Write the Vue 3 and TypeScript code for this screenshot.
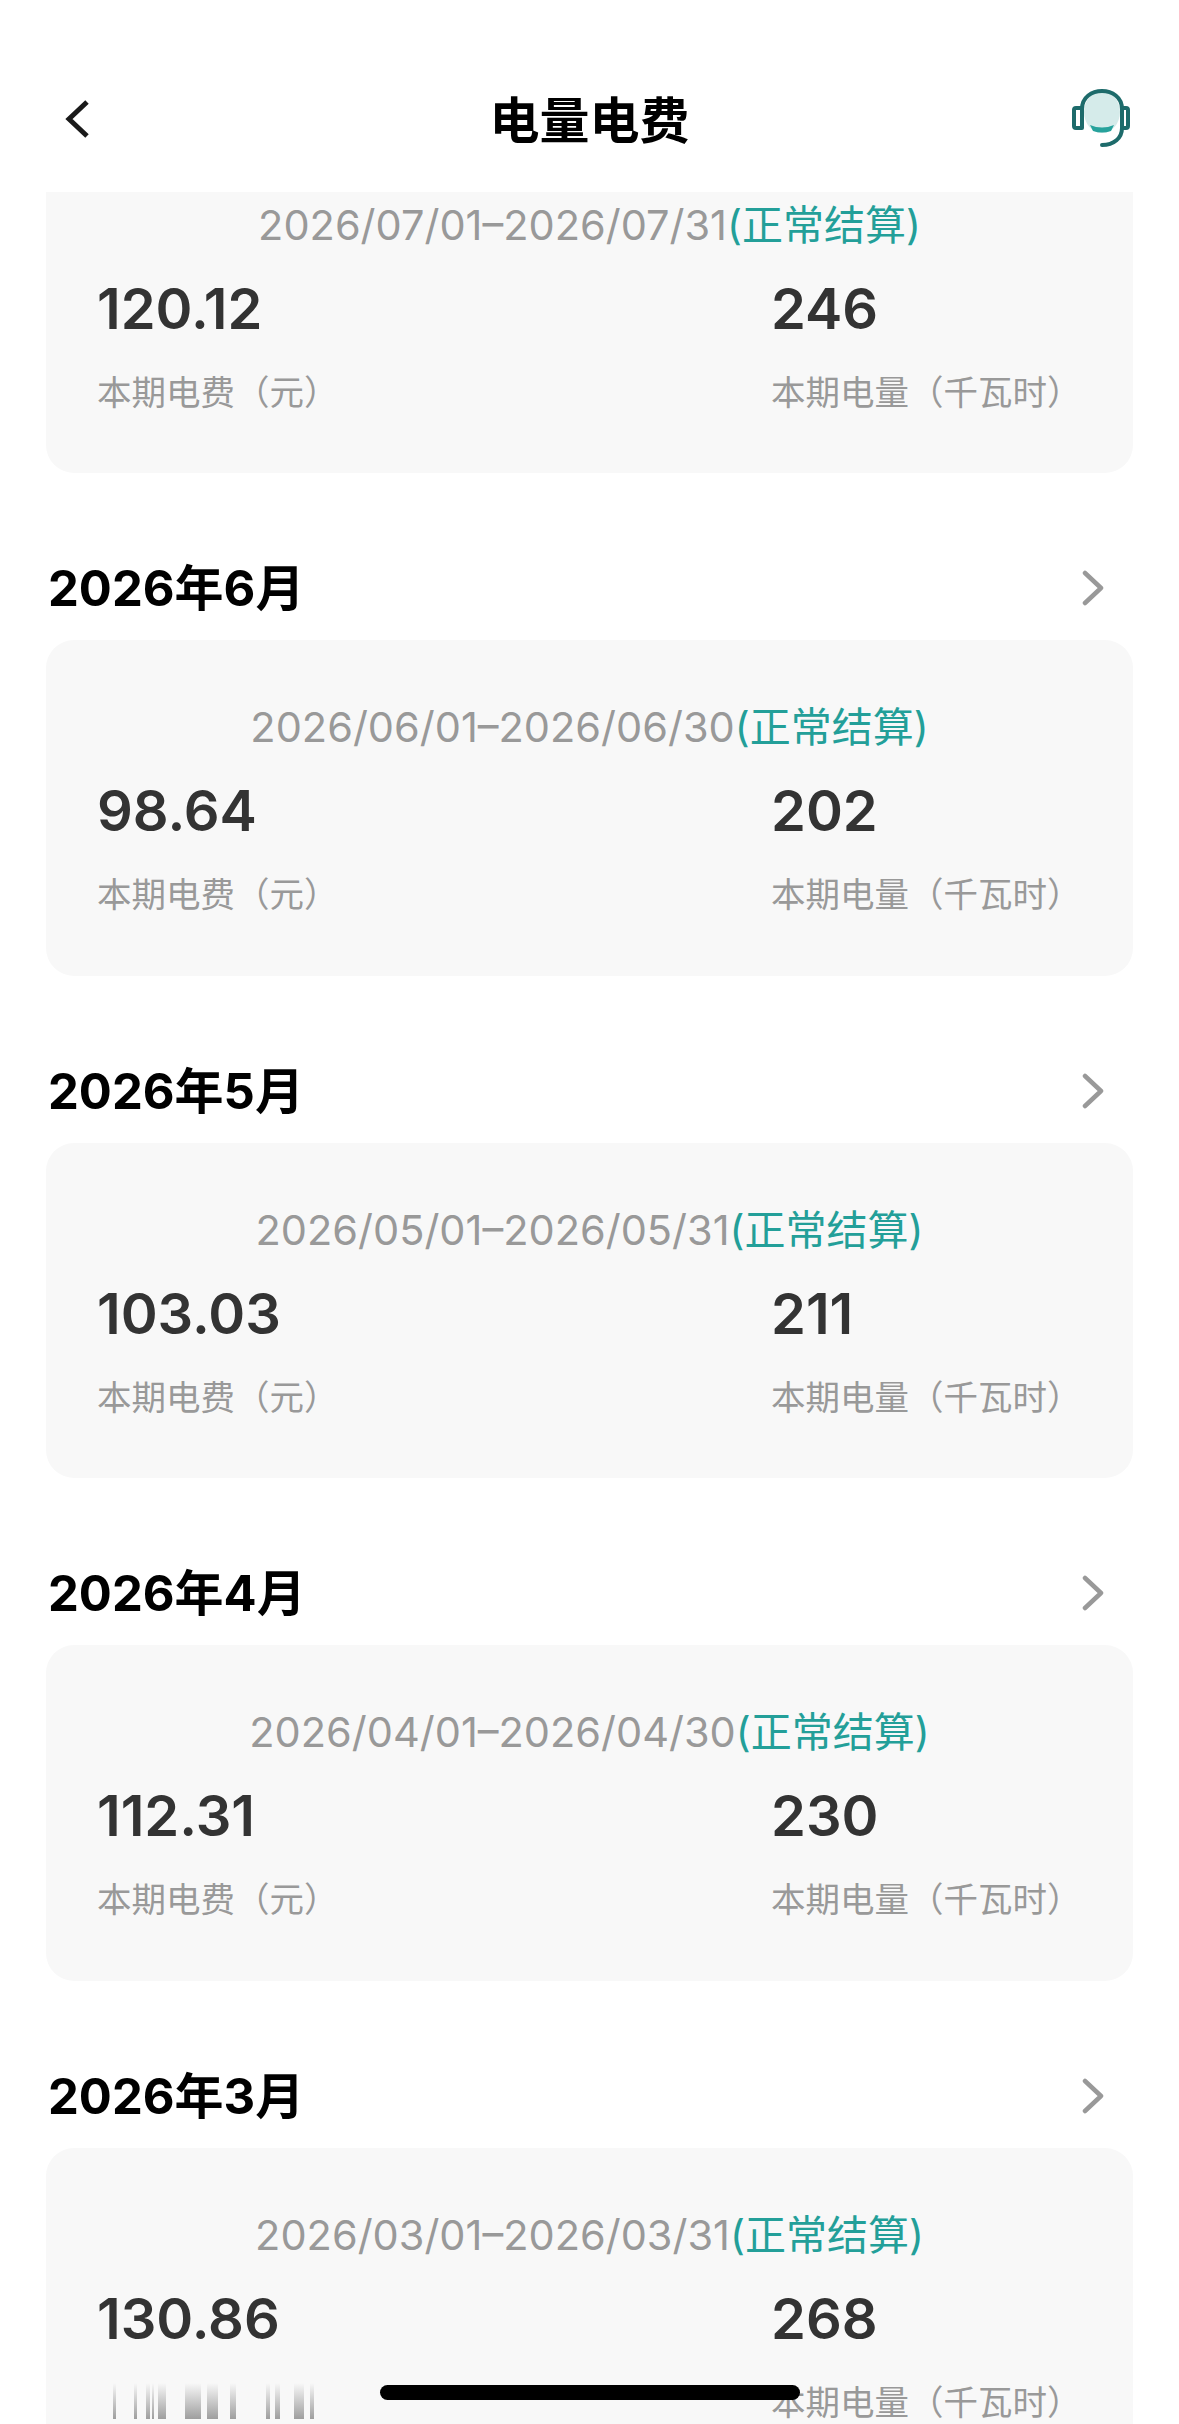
<script setup lang="ts">
interface Bill {
  month?: string;
  period: string;
  fee: string;
  power: string;
}

const bills: Bill[] = [
  { period: '2026/07/01–2026/07/31', fee: '120.12', power: '246' },
  { month: '2026年6月', period: '2026/06/01–2026/06/30', fee: '98.64', power: '202' },
  { month: '2026年5月', period: '2026/05/01–2026/05/31', fee: '103.03', power: '211' },
  { month: '2026年4月', period: '2026/04/01–2026/04/30', fee: '112.31', power: '230' },
  { month: '2026年3月', period: '2026/03/01–2026/03/31', fee: '130.86', power: '268' }
];

// streaks smeared over the last fee label: gap before, width
const streaks = [
  [0, 3], [18, 3], [9, 4], [2, 2], [4, 8], [19, 16], [6, 11], [12, 6], [30, 4], [5, 5], [14, 10], [6, 4]
];
</script>

<template>
  <div class="page">
    <header class="nav">
      <svg class="back" viewBox="0 0 30 40" width="30" height="40">
        <path d="M25 3 L7 20 L25 37" fill="none" stroke="#1a1a1a" stroke-width="5" />
      </svg>
      <h1 class="nav_title">电量电费</h1>
      <svg class="service" viewBox="0 0 60 62" width="60" height="62">
        <ellipse cx="31" cy="24" rx="18" ry="21" fill="#d5ebea" />
        <path d="M19 37 Q31 42 43 37 L40 43 Q31 46 22 43 Z" fill="#27a29c" />
        <path d="M11 32 V21 C11 -3 51 -3 51 21 V40 C51 50 43 57 31 57" fill="none" stroke="#1d6b6b" stroke-width="4" stroke-linecap="round" />
        <path d="M11 20 H5 Q3 20 3 22 V38 Q3 40 5 40 H11 Z M51 20 H55 Q57 20 57 22 V38 Q57 40 55 40 H51 Z" fill="none" stroke="#1d6b6b" stroke-width="4" stroke-linejoin="round" />
      </svg>
    </header>

    <main class="list">
      <section v-for="bill in bills" :key="bill.period" class="group">
        <div v-if="bill.month" class="month_row">
          <span class="month">{{ bill.month }}</span>
          <svg viewBox="0 0 24 36" width="24" height="36">
            <path d="M4 3 L20 18 L4 33" fill="none" stroke="#999" stroke-width="4.5" stroke-linecap="round" stroke-linejoin="round" />
          </svg>
        </div>
        <div class="card">
          <p class="period">{{ bill.period }}<span class="status">(正常结算)</span></p>
          <div class="stats">
            <div class="stat">
              <strong class="value">{{ bill.fee }}</strong>
              <span class="label" :class="{ label_hidden: bill.month === '2026年3月' }">本期电费（元）</span>
            </div>
            <div class="stat">
              <strong class="value">{{ bill.power }}</strong>
              <span class="label">本期电量（千瓦时）</span>
            </div>
          </div>
        </div>
      </section>
    </main>

    <div class="smear">
      <i
        v-for="(streak, index) in streaks"
        :key="index"
        :style="{ marginLeft: streak[0] + 'px', width: streak[1] + 'px' }"
      ></i>
    </div>
    <div class="home_bar"></div>
  </div>
</template>

<style scoped>
.page {
  position: relative;
  width: 1179px;
  height: 2424px;
  overflow: hidden;
  background: #fff;
  font-family: "Inter", "Noto Sans CJK SC", sans-serif;
}

.nav {
  height: 192px;
  box-sizing: border-box;
  padding: 88px 48px 0;
  display: grid;
  grid-template-columns: 1fr auto 1fr;
  align-items: start;
}

.back {
  margin: 11px 0 0 14px;
}

.service {
  justify-self: end;
}

.nav_title {
  margin: 0;
  font-family: "Noto Sans CJK SC", sans-serif;
  font-size: 50px;
  line-height: 58px;
  font-weight: 700;
  color: #000;
}

.list {
  height: 2232px;
  overflow: hidden;
  padding: 0 46px;
}

.group:first-child {
  margin-top: -54.5px;
}

.month_row {
  height: 167px;
  box-sizing: border-box;
  padding: 87px 28px 0 2px;
  display: flex;
  justify-content: space-between;
  align-items: flex-start;
}

.month {
  font-size: 49px;
  line-height: 58px;
  font-weight: 700;
  color: #000;
}

.month_row svg {
  margin-top: 10px;
}

.card {
  height: 335.5px;
  box-sizing: border-box;
  padding: 60px 51px 0;
  background: #f8f8f8;
  border-radius: 28px;
}

.period {
  margin: 0;
  text-align: center;
  font-size: 41.5px;
  line-height: 54px;
  color: #999;
  white-space: nowrap;
}

.status {
  font-size: 41px;
  color: #239f99;
}

.stats {
  margin-top: 22px;
  display: grid;
  grid-template-columns: 674px 1fr;
}

.stat {
  display: flex;
  flex-direction: column;
}

.value {
  font-size: 56px;
  line-height: 70px;
  font-weight: 600;
  color: #333;
}

.label {
  margin-top: 25px;
  font-size: 34.5px;
  line-height: 48px;
  color: #999;
  white-space: nowrap;
}

.label_hidden {
  visibility: hidden;
}

.smear {
  position: absolute;
  left: 113px;
  top: 2383px;
  height: 36px;
  display: flex;
}

.smear i {
  display: block;
  background: linear-gradient(to bottom, rgba(130, 130, 130, 0), rgba(120, 120, 120, 0.7));
}

.home_bar {
  position: absolute;
  left: 380px;
  top: 2385px;
  width: 420px;
  height: 15px;
  border-radius: 8px;
  background: #000;
}
</style>
